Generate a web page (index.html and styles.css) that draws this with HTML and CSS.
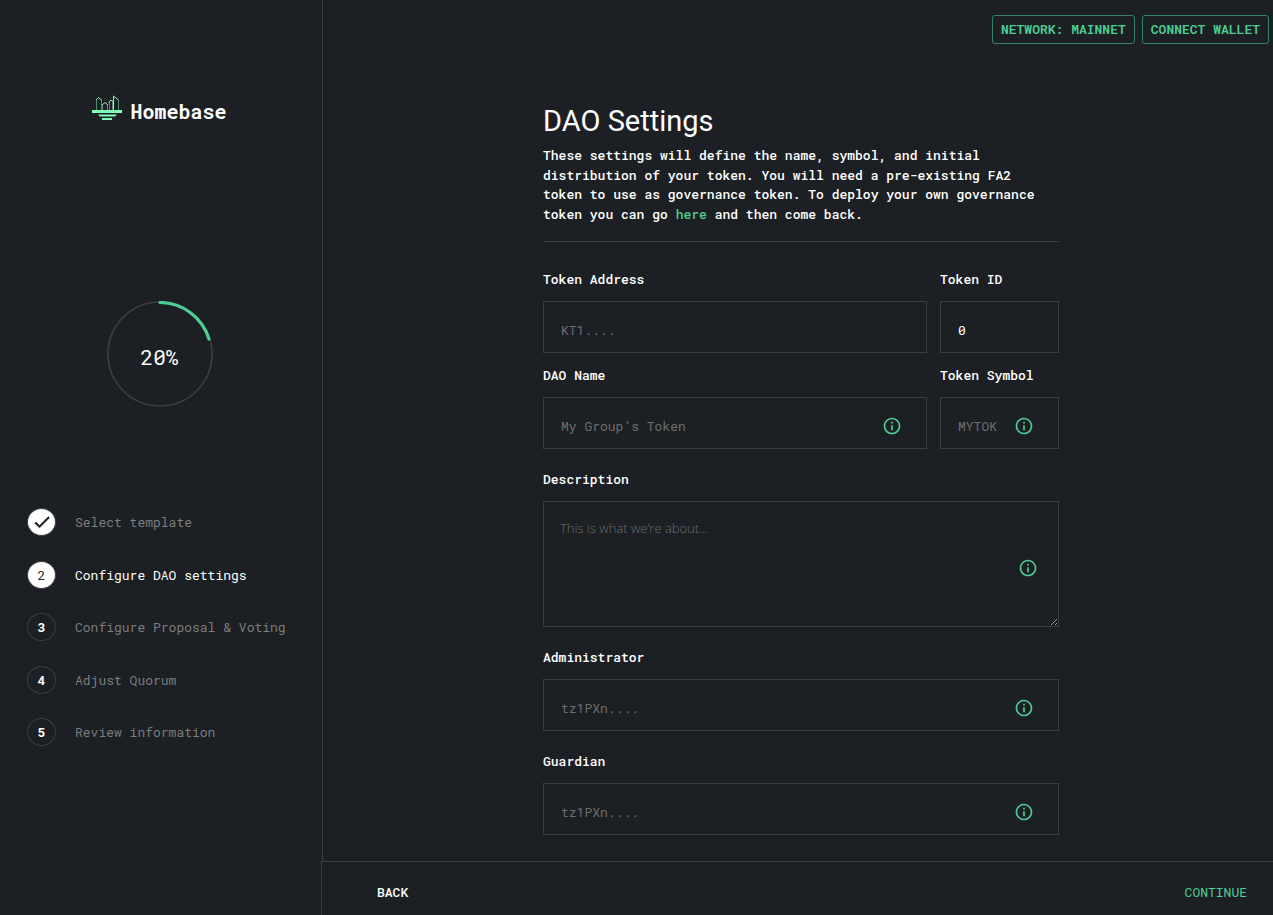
FILE: index.html
```html
<!DOCTYPE html>
<html lang="en">
<head>
<meta charset="utf-8">
<meta name="viewport" content="width=device-width, initial-scale=1">
<title>Homebase - DAO Settings</title>
<link rel="stylesheet" href="styles.css">
</head>
<body>
<svg class="sprite" aria-hidden="true">
  <symbol id="info" viewBox="0 0 24 24"><path fill="currentColor" d="M11 7h2v2h-2zm0 4h2v6h-2zm1-9C6.480 2 2 6.480 2 12s4.480 10 10 10 10-4.480 10-10S17.520 2 12 2zm0 18c-4.410 0-8-3.590-8-8s3.590-8 8-8 8 3.590 8 8-3.590 8-8 8z"/></symbol>
</svg>
<div class="app">
  <aside class="sidebar">
    <div class="brand">
      <svg class="brand-mark" viewBox="0 0 30 26" aria-hidden="true">
        <g fill="none" stroke="#81feb7" stroke-width="1">
          <path stroke-opacity=".5" d="M4.500 15V4.500M9.500 15V4.500M10.500 15V9.500M15.500 15V9.500M17.500 15V6.500M20.500 15V6.500M26.500 15V5"/>
          <path d="M4 5L6.500 2.500L9.500 5M10 10l3-2.500L16 10M16.500 7.500L19 5l2 1.500M21.500 15V1l5 4"/>
        </g>
        <path fill="#81feb7" d="M0 15h30v3H0zM6 19.500h19l-2 2H8zM10 23h10v2H10z"/>
      </svg>
      <span class="brand-name">Homebase</span>
    </div>
    <div class="progress">
      <svg viewBox="0 0 106 106" aria-hidden="true">
        <circle cx="53" cy="53" r="52" fill="none" stroke="#3d3d3d" stroke-width="1.700"/>
        <path d="M53 1.500A51.500 51.500 0 0 1 102 38" fill="none" stroke="#4bcf93" stroke-width="3.200" stroke-linecap="round"/>
      </svg>
      <span class="progress-value">20%</span>
    </div>
    <ol class="steps">
      <li class="step done"><span class="dot"><svg viewBox="0 0 24 24" aria-hidden="true"><path fill="#1c1f23" stroke="#1c1f23" stroke-width=".8" d="M9 16.170L4.830 12l-1.420 1.410L9 19 21 7l-1.410-1.410z"/></svg></span>Select template</li>
      <li class="step current"><span class="dot">2</span>Configure DAO settings</li>
      <li class="step"><span class="dot">3</span>Configure Proposal &amp; Voting</li>
      <li class="step"><span class="dot">4</span>Adjust Quorum</li>
      <li class="step"><span class="dot">5</span>Review information</li>
    </ol>
  </aside>
  <div class="page">
    <header class="topbar">
      <button class="outlined" type="button">NETWORK: MAINNET</button>
      <button class="outlined" type="button">CONNECT WALLET</button>
    </header>
    <main class="content">
      <h1>DAO Settings</h1>
      <p class="intro">These settings will define the name, symbol, and initial distribution of your token. You will need a pre-existing FA2 token to use as governance token. To deploy your own governance token you can go <a href="#">here</a> and then come back.</p>
      <form class="form" id="dao-form">
        <div class="pair">
          <div class="field">
            <label for="address">Token Address</label>
            <div class="box"><input id="address" type="text" placeholder="KT1...."></div>
          </div>
          <div class="field">
            <label for="token-id">Token ID</label>
            <div class="box"><input id="token-id" type="text" value="0"></div>
          </div>
          <div class="field">
            <label for="name">DAO Name</label>
            <div class="box"><input id="name" type="text" placeholder="My Group’s Token"><svg class="info"><use href="#info"/></svg></div>
          </div>
          <div class="field">
            <label for="symbol">Token Symbol</label>
            <div class="box"><input id="symbol" type="text" placeholder="MYTOK"><svg class="info"><use href="#info"/></svg></div>
          </div>
        </div>
        <div class="field">
          <label for="description">Description</label>
          <div class="area"><textarea id="description" placeholder="This is what we’re about..."></textarea><svg class="info"><use href="#info"/></svg></div>
        </div>
        <div class="field">
          <label for="admin">Administrator</label>
          <div class="box"><input id="admin" type="text" placeholder="tz1PXn...."><svg class="info"><use href="#info"/></svg></div>
        </div>
        <div class="field">
          <label for="guardian">Guardian</label>
          <div class="box"><input id="guardian" type="text" placeholder="tz1PXn...."><svg class="info"><use href="#info"/></svg></div>
        </div>
      </form>
    </main>
    <footer class="actions">
      <button class="plain" type="button">BACK</button>
      <button class="plain next" type="submit" form="dao-form">CONTINUE</button>
    </footer>
  </div>
</div>
</body>
</html>
```
FILE: styles.css
```css
:root {
  --bg: #1c1f23;
  --line: #3d3d3d;
  --green: #4bcf93;
  --muted: #7b7d7f;
  --mono: "Roboto Mono", "DejaVu Sans Mono", "Liberation Mono", monospace;
}

* { box-sizing: border-box; }

body {
  margin: 0;
  background: var(--bg);
  color: #fff;
  font: 13px/20px var(--mono);
}

button, input, textarea {
  margin: 0;
  font: inherit;
  color: inherit;
  background: none;
  border: 0;
}

.sprite { position: absolute; width: 0; height: 0; }

.app { display: flex; min-height: 100vh; }

.sidebar {
  flex: none;
  width: 323px;
  padding: 93px 3px 40px 0;
  border-right: 1px solid var(--line);
  display: flex;
  flex-direction: column;
  align-items: center;
}

.brand { display: flex; align-items: center; gap: 8px; }
.brand-mark { width: 30px; height: 26px; }
.brand-name { font-size: 20px; line-height: 24px; font-weight: 700; padding-top: 6px; }

.progress { display: grid; place-items: center; margin-top: 178px; }
.progress > * { grid-area: 1 / 1; }
.progress svg { width: 106px; height: 106px; }
.progress-value { font-size: 21px; line-height: 24px; padding-top: 6px; }

.steps {
  list-style: none;
  align-self: stretch;
  margin: 101px 0 0;
  padding: 0 0 0 27px;
  min-height: 238px;
  display: flex;
  flex-direction: column;
  justify-content: space-between;
}
.step { display: flex; align-items: center; gap: 19px; color: var(--muted); white-space: nowrap; }
.dot {
  width: 29px;
  height: 28px;
  border: 1px solid var(--line);
  border-radius: 50%;
  display: grid;
  place-items: center;
  color: #fff;
  font-weight: 700;
}
.done .dot, .current .dot { background: #fff; color: var(--bg); font-weight: 400; }
.dot svg { width: 20px; height: 20px; }
.current { color: #fff; }

.page { flex: 1; min-width: 0; display: flex; flex-direction: column; }

.topbar { display: flex; justify-content: flex-end; gap: 7px; padding: 15px 4px 0; }
.outlined {
  height: 29px;
  padding: 0 8px 2px;
  border: 1px solid #358362;
  border-radius: 3px;
  color: var(--green);
  font-weight: 600;
  cursor: pointer;
}

.content {
  flex: 1;
  width: 100%;
  max-width: 522px;
  margin: 0 auto;
  padding: 59px 0 26px 6px;
}

h1 { margin: 0; font: 400 29px/36px Roboto, sans-serif; }
.intro {
  margin: 7px 0 0;
  padding: 0 12px 17px 0;
  font-weight: 500;
  line-height: 1.5;
  border-bottom: 1px solid var(--line);
}
.intro a { color: var(--green); text-decoration: none; }

.form { display: grid; gap: 20px; margin-top: 27px; }
.pair { display: grid; grid-template-columns: minmax(0, 1fr) 119px; gap: 12px 13px; }
.field { display: grid; grid-template-columns: minmax(0, 1fr); gap: 12px; }
.field label { font-weight: 500; }

.box {
  display: flex;
  align-items: center;
  height: 52px;
  padding: 6px 24px 0 17px;
  border: 1px solid var(--line);
}
.box input { flex: 1; min-width: 0; width: 0; padding: 0; outline: 0; }
.info { flex: none; width: 20px; height: 20px; color: var(--green); }

.area { position: relative; display: grid; }
.area .info { position: absolute; right: 21px; top: 57px; }
textarea {
  height: 126px;
  padding: 16px;
  border: 1px solid var(--line);
  outline: 0;
  resize: vertical;
  font: 300 13px/20px "Open Sans", sans-serif;
}
::placeholder { color: #6c6e70; opacity: 1; }

.actions {
  position: relative;
  display: flex;
  justify-content: space-between;
  align-items: center;
  height: 54px;
  margin-left: -2px;
  padding: 6px 26px 0 55px;
  background: var(--bg);
  border: solid var(--line);
  border-width: 1px 0 0 1px;
}
.plain { padding: 0; font-weight: 500; cursor: pointer; }
.next { color: var(--green); font-weight: 400; }
```
